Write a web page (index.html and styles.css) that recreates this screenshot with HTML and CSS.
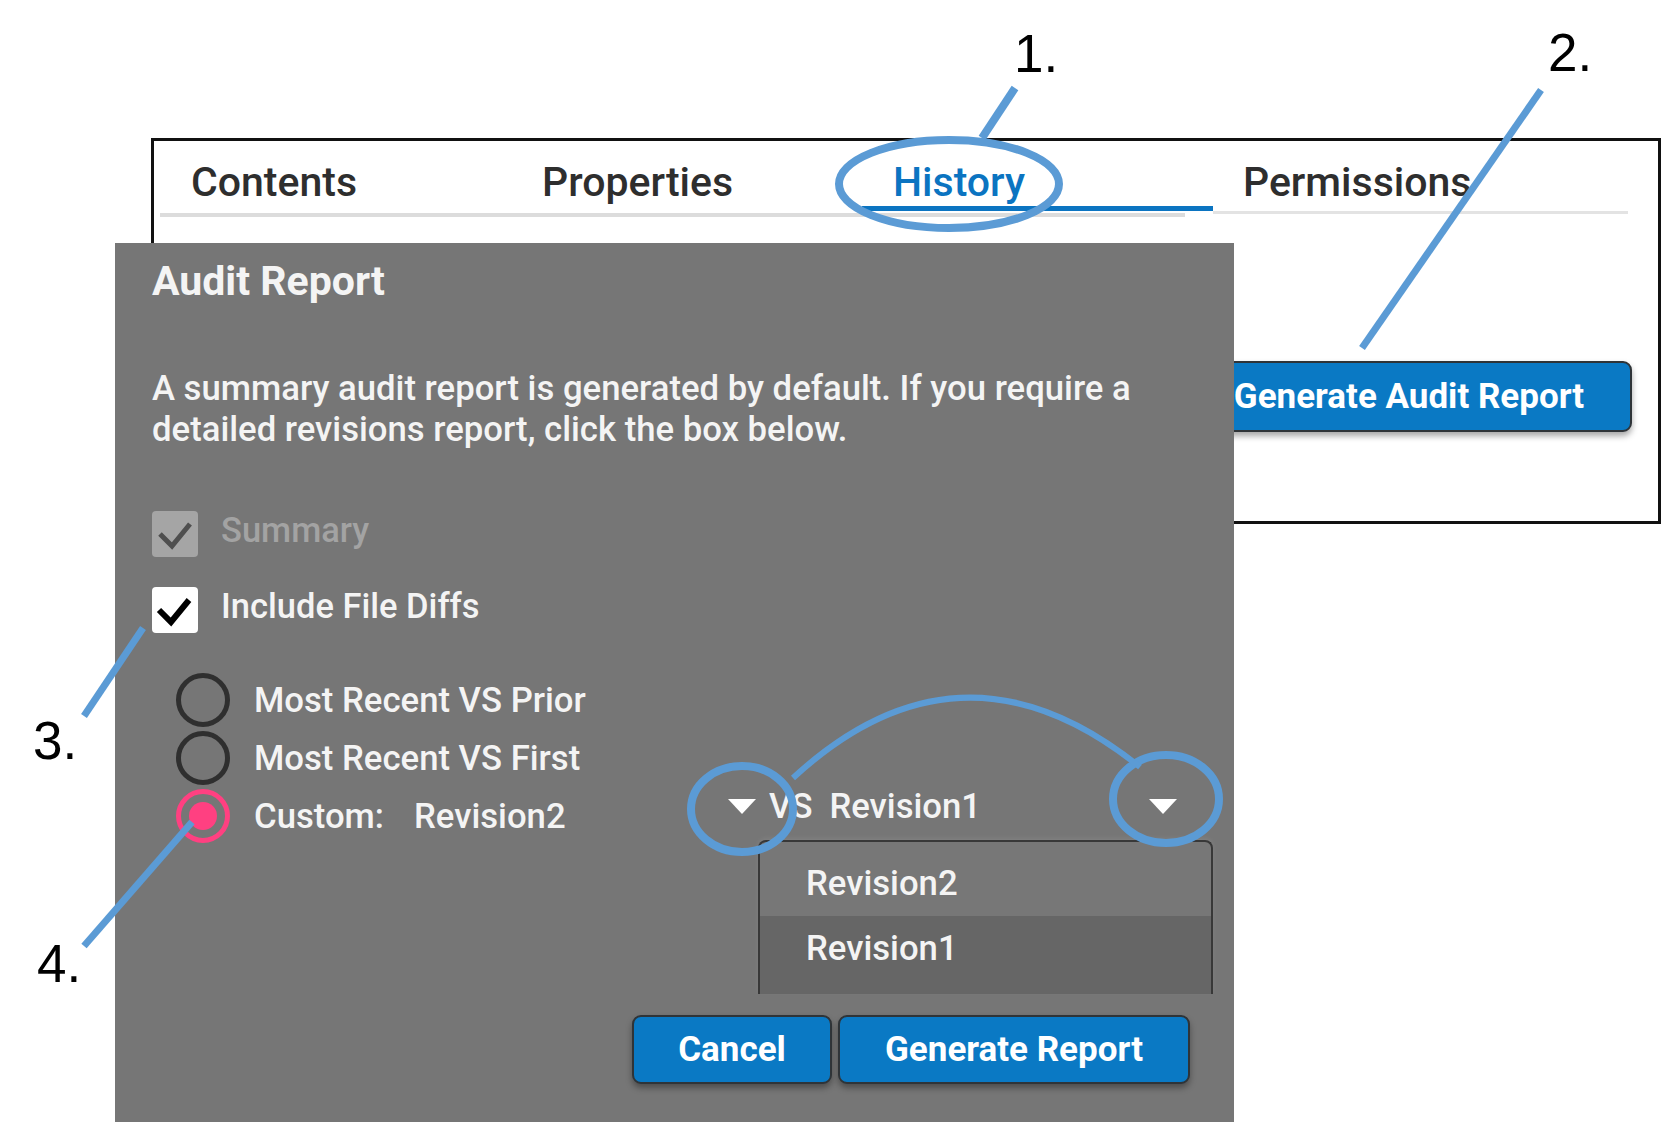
FILE: index.html
```html
<!DOCTYPE html>
<html lang="en">
<head>
    <meta charset="UTF-8">
    <title>Audit Report</title>
    <link rel="stylesheet" href="styles.css">
</head>
<body>
    <div class="panel">
        <div class="tabs">
            <div class="tab">Contents</div>
            <div class="tab">Properties</div>
            <div class="tab active">History</div>
            <div class="tab tab-last">Permissions</div>
        </div>
        <div class="tab-rule"></div>
        <div class="panel-actions">
            <button class="btn btn-audit">Generate Audit Report</button>
        </div>
    </div>

    <div class="dialog">
        <h2 class="dialog-title">Audit Report</h2>
        <p class="dialog-text">A summary audit report is generated by default. If you require a detailed revisions report, click the box below.</p>

        <div class="check-row disabled">
            <span class="checkbox">
                <svg width="46" height="46" viewBox="0 0 46 46"><polyline points="8,23 20,35 38,13" fill="none" stroke="#4f4f4f" stroke-width="5"/></svg>
            </span>
            <span>Summary</span>
        </div>
        <div class="check-row">
            <span class="checkbox checked">
                <svg width="46" height="46" viewBox="0 0 46 46"><polyline points="7,23 19,35 37,13" fill="none" stroke="#000" stroke-width="6"/></svg>
            </span>
            <span>Include File Diffs</span>
        </div>

        <div class="radio-group">
            <div class="radio-row">
                <span class="radio"></span>
                <span>Most Recent VS Prior</span>
            </div>
            <div class="radio-row">
                <span class="radio"></span>
                <span>Most Recent VS First</span>
            </div>
            <div class="radio-row">
                <span class="radio on"></span>
                <div class="custom">
                    <span class="custom-label">Custom:</span>
                    <div class="select select-from">
                        <span>Revision2</span>
                        <span class="caret"></span>
                    </div>
                    <div class="select select-to">
                        <span>VS</span>
                        <span class="select-value">Revision1</span>
                        <span class="caret"></span>
                        <ul class="menu">
                            <li>Revision2</li>
                            <li class="hover">Revision1</li>
                        </ul>
                    </div>
                </div>
            </div>
        </div>

        <div class="dialog-actions">
            <button class="btn btn-cancel">Cancel</button>
            <button class="btn btn-generate">Generate Report</button>
        </div>
    </div>

    <!-- callouts -->
    <svg class="notes" width="1663" height="1122" viewBox="0 0 1663 1122">
        <g fill="none" stroke="#5b9bd5">
            <ellipse cx="949" cy="184" rx="110" ry="44" stroke-width="8"/>
            <line x1="1015" y1="88" x2="982" y2="138" stroke-width="8"/>
            <line x1="1541" y1="90" x2="1362" y2="348" stroke-width="7"/>
            <line x1="143" y1="628" x2="84" y2="716" stroke-width="7"/>
            <line x1="192" y1="822" x2="84" y2="946" stroke-width="7"/>
            <ellipse cx="742" cy="809" rx="51" ry="43" stroke-width="8"/>
            <ellipse cx="1166" cy="799" rx="53" ry="44" stroke-width="8"/>
            <path d="M793,778 Q961,623 1140,767" stroke-width="6"/>
        </g>
    </svg>
    <span class="note-num n1">1.</span>
    <span class="note-num n2">2.</span>
    <span class="note-num n3">3.</span>
    <span class="note-num n4">4.</span>
</body>
</html>
```

FILE: styles.css
```css
body {
    margin: 0;
    width: 1663px;
    height: 1122px;
    overflow: hidden;
    position: relative;
    background: #fff;
    font-family: Roboto, "Liberation Sans", sans-serif;
}
.panel {
    box-sizing: border-box;
    margin: 138px 0 0 151px;
    width: 1510px;
    height: 386px;
    border: 3px solid #111;
}
.tabs {
    display: flex;
    align-items: flex-start;
    padding: 17px 0 0 6px;
}
.tab {
    box-sizing: border-box;
    width: 351px;
    padding-left: 31px;
    font-size: 41px;
    font-weight: 500;
    line-height: 48px;
    color: #2e2e2e;
}
.tab.active {
    color: #0b74c1;
    border-bottom: 5px solid #0b74c1;
}
.tab-last {
    width: 415px;
    padding-left: 30px;
    padding-bottom: 5px;
    border-bottom: 3px solid #e3e3e3;
}
.tab-rule {
    margin: -1px 0 0 6px;
    width: 1025px;
    height: 4px;
    background: #dcdcdc;
}
.panel-actions {
    display: flex;
    justify-content: flex-end;
    margin-top: 144px;
    padding-right: 26px;
}
.btn {
    box-sizing: border-box;
    height: 69px;
    padding: 0;
    background: #0a79c4;
    color: #fff;
    font-family: Roboto, "Liberation Sans", sans-serif;
    font-size: 35px;
    font-weight: bold;
    border: 2px solid #2f3438;
    border-radius: 9px;
    box-shadow: 0 4px 6px rgba(0, 0, 0, 0.35);
}
.btn-audit {
    width: 446px;
    height: 71px;
}
.btn-cancel {
    width: 200px;
}
.btn-generate {
    width: 352px;
}
.dialog {
    position: absolute;
    left: 115px;
    top: 243px;
    box-sizing: border-box;
    width: 1119px;
    height: 879px;
    padding: 14px 0 0 37px;
    background: #767676;
    color: #f4f4f4;
}
.dialog-title {
    margin: 0;
    font-size: 41px;
    line-height: 48px;
    font-weight: bold;
}
.dialog-text {
    margin: 63px 0 0;
    max-width: 1060px;
    font-size: 34.7px;
    font-weight: 500;
    line-height: 41px;
}
.check-row {
    display: flex;
    align-items: center;
    gap: 23px;
    margin-top: 30px;
    font-size: 34.5px;
    font-weight: 500;
    line-height: 40px;
}
.check-row span:last-child {
    margin-top: -9px;
}
.check-row.disabled {
    margin-top: 61px;
    color: #a3a3a3;
}
.checkbox {
    display: block;
    width: 46px;
    height: 46px;
    border-radius: 4px;
    background: #a5a5a5;
}
.checkbox svg {
    display: block;
}
.checkbox.checked {
    background: #fff;
}
.radio-group {
    margin-top: 38px;
    padding-left: 24px;
}
.radio-row {
    display: flex;
    align-items: center;
    gap: 24px;
    height: 58px;
    font-size: 34.7px;
    font-weight: 500;
    line-height: 40px;
}
.radio {
    box-sizing: border-box;
    width: 54px;
    height: 54px;
    flex-shrink: 0;
    border: 5px solid #2f2f2f;
    border-radius: 50%;
    display: flex;
    align-items: center;
    justify-content: center;
}
.radio.on {
    border-color: #ff4081;
}
.radio.on::after {
    content: "";
    width: 28px;
    height: 28px;
    border-radius: 50%;
    background: #ff4081;
}
.custom {
    display: flex;
    align-items: center;
}
.custom-label {
    margin-right: 30px;
}
.select {
    display: flex;
    align-items: center;
}
.select-from {
    width: 342px;
    justify-content: space-between;
}
.select-to {
    position: relative;
    box-sizing: border-box;
    width: 455px;
    margin: 0 0 20px 2px;
    padding: 0 36px 0 11px;
}
.select-value {
    margin-left: 17px;
}
.caret {
    width: 0;
    height: 0;
    margin-bottom: 20px;
    border-left: 14px solid transparent;
    border-right: 14px solid transparent;
    border-top: 15px solid #fff;
}
.select-to .caret {
    margin: 0 0 0 auto;
}
.menu {
    position: absolute;
    left: 0;
    top: 54px;
    box-sizing: border-box;
    width: 455px;
    margin: 0;
    padding: 9px 0 0;
    list-style: none;
    background: #777;
    border: 2px solid #383838;
    border-bottom: none;
    border-radius: 8px 8px 0 0;
    box-shadow: 0 -2px 4px rgba(255, 255, 255, 0.08);
}
.menu li {
    padding-left: 46px;
    line-height: 65px;
}
.menu li.hover {
    background: #666;
    padding-bottom: 13px;
}
.dialog-actions {
    display: flex;
    justify-content: flex-end;
    gap: 6px;
    margin-top: 170px;
    padding-right: 44px;
}
.notes {
    position: absolute;
    left: 0;
    top: 0;
    pointer-events: none;
}
.note-num {
    position: absolute;
    font-family: "Liberation Sans", Arial, sans-serif;
    font-size: 53px;
    line-height: 53px;
    color: #000;
}
.n1 { left: 1014px; top: 27px; }
.n2 { left: 1548px; top: 26px; }
.n3 { left: 33px; top: 714px; }
.n4 { left: 37px; top: 937px; }
```
